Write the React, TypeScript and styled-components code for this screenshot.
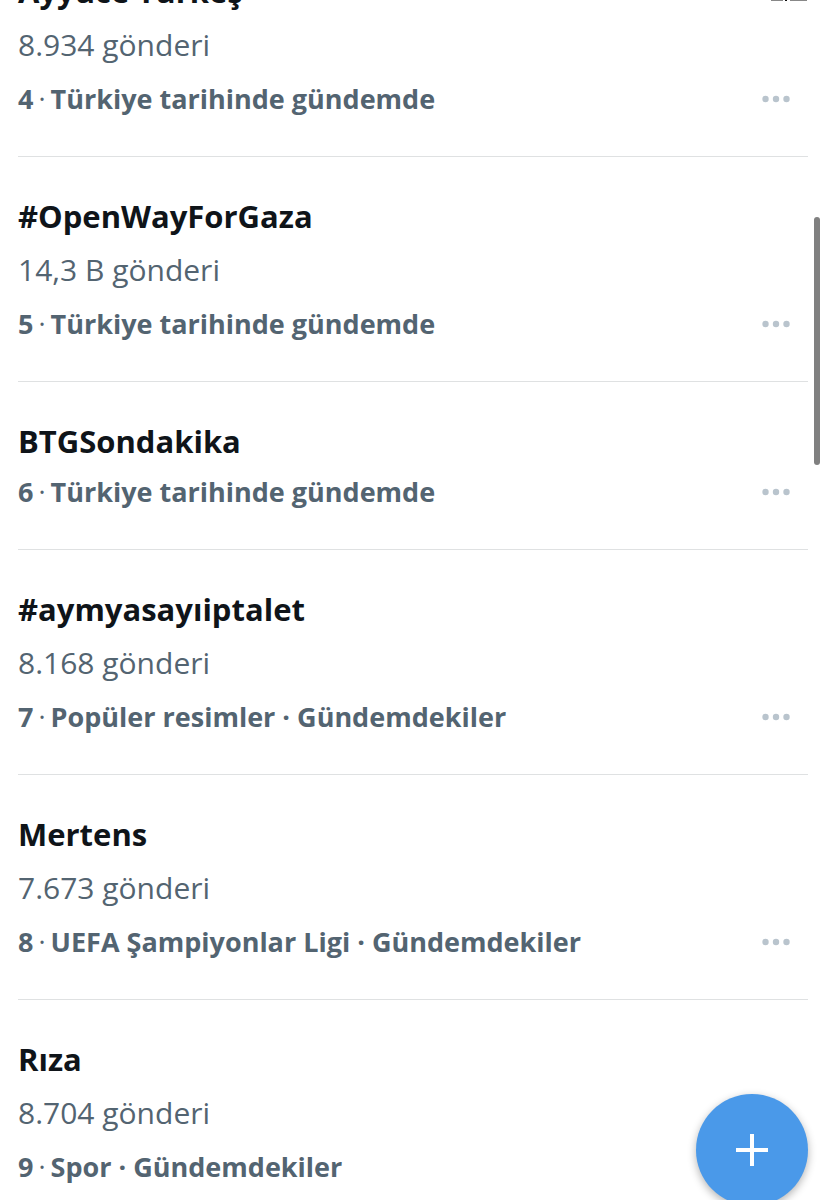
import React from "react";
import styled, { createGlobalStyle } from "styled-components";

const GlobalStyle = createGlobalStyle`
  * { box-sizing: border-box; }
  html, body { margin: 0; padding: 0; background: #ffffff; }
  body { overflow: hidden; font-family: "Open Sans", "Noto Sans", sans-serif; }
`;

const Page = styled.main`
  height: 100vh;
  overflow: hidden;
  padding: 0 17px 0 18px;
  background: #ffffff;
`;

/* The list is shown part-way through its scroll. */
const TrendList = styled.ul`
  list-style: none;
  margin: -68px 0 0;
  padding: 0;
`;

const TrendItem = styled.li`
  padding: 34px 0 31px;
  border-bottom: 1px solid #dfe1e2;
`;

const TitleRow = styled.div`
  display: flex;
  align-items: flex-start;
  justify-content: space-between;
  height: 50px;
`;

const Title = styled.h2`
  margin: 0;
  font-size: 31px;
  line-height: 50px;
  font-weight: 700;
  color: #0f1419;
  white-space: nowrap;
`;

const Count = styled.p`
  margin: 0;
  font-size: 30px;
  line-height: 57px;
  font-weight: 400;
  color: #536471;
`;

const MetaRow = styled.div`
  display: flex;
  align-items: center;
  justify-content: space-between;
  height: 52px;
  padding-right: 18px;
`;

const Meta = styled.p`
  display: flex;
  gap: 5px;
  margin: 0;
  font-size: 27px;
  line-height: 50px;
  font-weight: 700;
  color: #536471;
  white-space: nowrap;
`;

const RankDot = styled.span`
  font-weight: 400;
`;

const MoreButton = styled.button`
  display: flex;
  padding: 0;
  border: 0;
  background: none;
  color: #b9c4cd;
  cursor: pointer;
`;

const ComposeButton = styled.button`
  position: fixed;
  right: 17px;
  bottom: -6px;
  display: flex;
  align-items: center;
  justify-content: center;
  width: 112px;
  height: 112px;
  padding: 0;
  border: 0;
  border-radius: 50%;
  background: #4a99e9;
  box-shadow: 0 3px 8px rgba(0, 0, 0, 0.3);
  cursor: pointer;
`;

const ScrollThumb = styled.div`
  position: fixed;
  top: 217px;
  right: 5px;
  width: 6px;
  height: 248px;
  border-radius: 3px;
  background: #808080;
`;

type Trend = {
  rank: number;
  title: string;
  count?: string;
  category: string;
  thumbnail?: boolean;
};

const trends: Trend[] = [
  { rank: 4, title: "Ayyüce Türkeş", count: "8.934 gönderi", category: "Türkiye tarihinde gündemde", thumbnail: true },
  { rank: 5, title: "#OpenWayForGaza", count: "14,3 B gönderi", category: "Türkiye tarihinde gündemde" },
  { rank: 6, title: "BTGSondakika", category: "Türkiye tarihinde gündemde" },
  { rank: 7, title: "#aymyasayıiptalet", count: "8.168 gönderi", category: "Popüler resimler · Gündemdekiler" },
  { rank: 8, title: "Mertens", count: "7.673 gönderi", category: "UEFA Şampiyonlar Ligi · Gündemdekiler" },
  { rank: 9, title: "Rıza", count: "8.704 gönderi", category: "Spor · Gündemdekiler" },
];

const Thumbnail = () => (
  <svg width="38" height="36" viewBox="0 0 38 36" aria-hidden="true">
    <path d="M1 34h12v1H1zM20 34h17v1H20z" fill="#888" />
    <path d="M15 34h2v1h-2z" fill="#111" />
  </svg>
);

const MoreIcon = () => (
  <svg width="28" height="8" viewBox="0 0 28 8" fill="currentColor" aria-hidden="true">
    <circle cx="3.5" cy="4" r="3.2" />
    <circle cx="14" cy="4" r="3.2" />
    <circle cx="24.5" cy="4" r="3.2" />
  </svg>
);

const PlusIcon = () => (
  <svg width="32" height="32" viewBox="0 0 32 32" stroke="#fff" strokeWidth="4" aria-hidden="true">
    <path d="M16 0v32M0 16h32" />
  </svg>
);

export default function App() {
  return (
    <>
      <GlobalStyle />
      <Page>
        <TrendList>
          {trends.map((t) => (
            <TrendItem key={t.rank}>
              <TitleRow>
                <Title>{t.title}</Title>
                {t.thumbnail && <Thumbnail />}
              </TitleRow>
              {t.count && <Count>{t.count}</Count>}
              <MetaRow>
                <Meta>
                  <span>{t.rank}</span>
                  <RankDot>·</RankDot>
                  <span>{t.category}</span>
                </Meta>
                <MoreButton type="button" aria-label="Daha fazla">
                  <MoreIcon />
                </MoreButton>
              </MetaRow>
            </TrendItem>
          ))}
        </TrendList>
      </Page>
      <ScrollThumb />
      <ComposeButton type="button" aria-label="Gönderi oluştur">
        <PlusIcon />
      </ComposeButton>
    </>
  );
}
